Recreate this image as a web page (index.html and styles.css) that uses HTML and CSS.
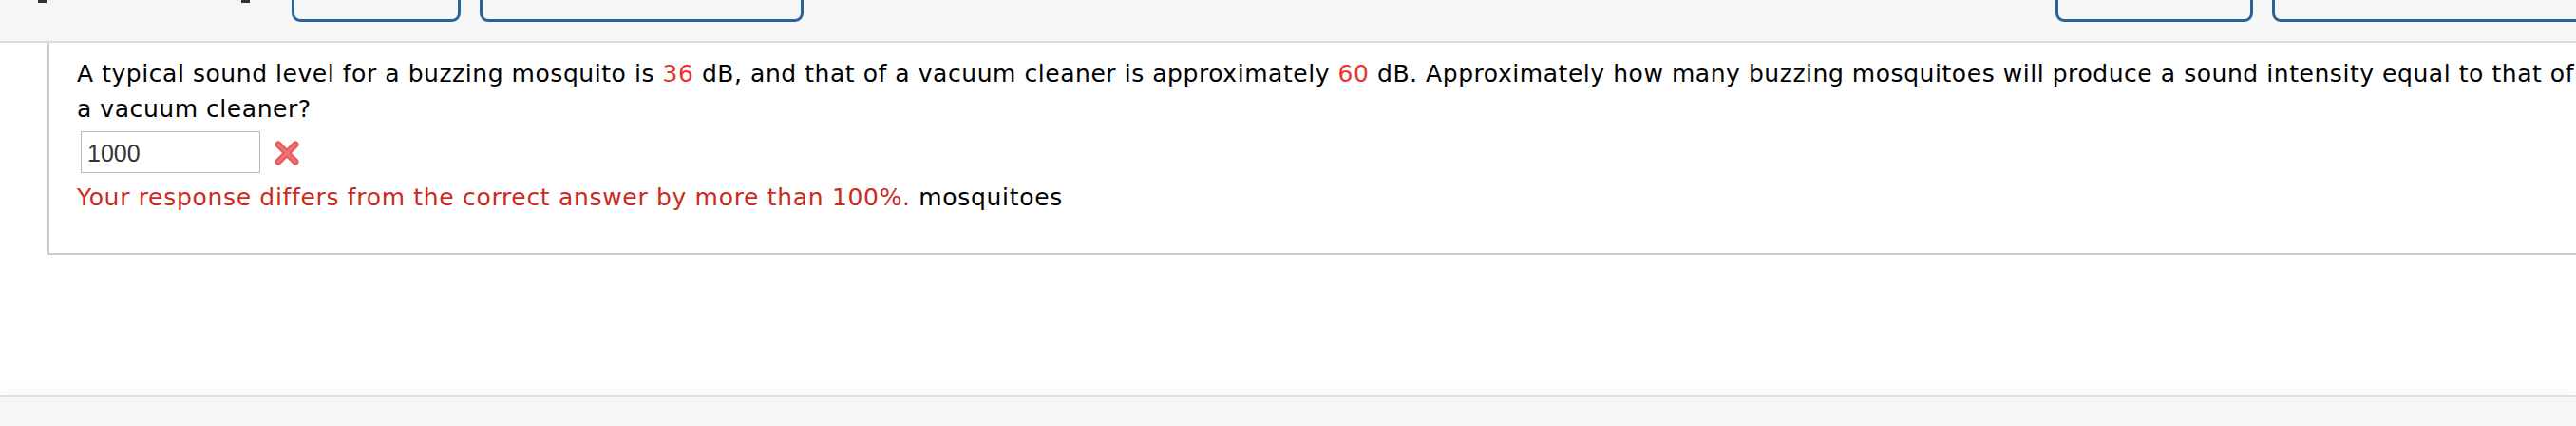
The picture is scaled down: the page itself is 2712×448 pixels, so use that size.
FILE: index.html
```html
<!DOCTYPE html>
<html lang="en">
<head>
    <meta charset="UTF-8">
    <title>Question</title>
    <link rel="stylesheet" href="styles.css">
</head>
<body>
    <!-- Top toolbar, buttons run off the top of the window -->
    <div id="toolbar">
        <div class="crumbs">
            <span class="mark"></span>
            <span class="mark"></span>
        </div>
        <div class="tool-btn btn-a"></div>
        <div class="tool-btn btn-b"></div>
        <div class="spacer"></div>
        <div class="tool-btn btn-c"></div>
        <div class="tool-btn btn-d"></div>
    </div>

    <!-- Question panel -->
    <div id="main">
        <div id="questionPanel">
            <p class="question">A typical sound level for a buzzing mosquito is <span class="num">36</span> dB, and that of a vacuum cleaner is approximately <span class="num">60</span> dB. Approximately how many buzzing mosquitoes will produce a sound intensity equal to that of a vacuum cleaner?</p>
            <div class="answer-row">
                <input type="text" class="answer" value="1000">
                <svg class="wrong" width="28" height="26" viewBox="0 0 28 26">
                    <path d="M5 4 L23 22 M23 4 L5 22" stroke="#e35b5b" stroke-width="7" stroke-linecap="round"/>
                    <path d="M5 4 L23 22 M23 4 L5 22" stroke="#ee7474" stroke-width="3" stroke-linecap="round"/>
                </svg>
            </div>
            <p class="feedback"><span class="error">Your response differs from the correct answer by more than 100%.</span> mosquitoes</p>
        </div>
    </div>

    <div id="footer"></div>
</body>
</html>
```

FILE: styles.css
```css
/* Page */
html {
    overflow: hidden;
}

body {
    margin: 0;
    min-height: 100vh;
    display: flex;
    flex-direction: column;
    font-family: "DejaVu Sans", Verdana, sans-serif;
    background-color: #fff;
    color: #000;
}

/* Toolbar */
#toolbar {
    height: 43px;
    display: flex;
    align-items: flex-end;
    background-color: #f6f6f6;
    border-bottom: 2px solid #dddddd;
    overflow: hidden;
    flex-shrink: 0;
}

.crumbs {
    width: 307px;
    height: 43px;
    flex-shrink: 0;
}

.mark {
    float: left;
    width: 9px;
    height: 3px;
    background-color: #333;
    margin-left: 40px;
}

.mark + .mark {
    margin-left: 205px;
}

.tool-btn {
    height: 40px;
    margin-bottom: 20px;
    border: 3px solid #2a6397;
    border-radius: 0 0 9px 9px;
    box-sizing: border-box;
    flex-shrink: 0;
}

.btn-a { width: 178px; }
.btn-b { width: 341px; margin-left: 20px; }
.btn-c { width: 208px; }
.btn-d { width: 400px; margin-left: 20px; }

.spacer {
    width: 1318px;
    flex-shrink: 0;
}

/* Question panel */
#main {
    flex: 1;
}

#questionPanel {
    width: 2645px;
    margin-left: 50px;
    padding: 14px 0 40px 29px;
    border-left: 2px solid #cccccc;
    border-bottom: 2px solid #cccccc;
    font-size: 25px;
    line-height: 37px;
    letter-spacing: 0.55px;
}

.question {
    margin: 0;
}

.num {
    color: #e8352a;
}

.answer-row {
    display: flex;
    align-items: center;
    margin-top: 5px;
}

.answer {
    width: 189px;
    height: 44px;
    box-sizing: border-box;
    margin: 0 0 0 4px;
    padding: 2px 6px 0;
    border: 1px solid #bbbbbb;
    font-family: "Liberation Sans", Arial, sans-serif;
    font-size: 25px;
    letter-spacing: 0;
    color: #333;
}

.wrong {
    margin-left: 14px;
    margin-top: 2px;
}

.feedback {
    margin: 7px 0 0;
    letter-spacing: 0.68px;
}

.error {
    color: #cc2a1e;
}

/* Footer band */
#footer {
    height: 31px;
    flex-shrink: 0;
    background-color: #f6f6f6;
    border-top: 2px solid #dddddd;
    box-shadow: 0 -6px 10px rgba(0, 0, 0, 0.025);
}
```
